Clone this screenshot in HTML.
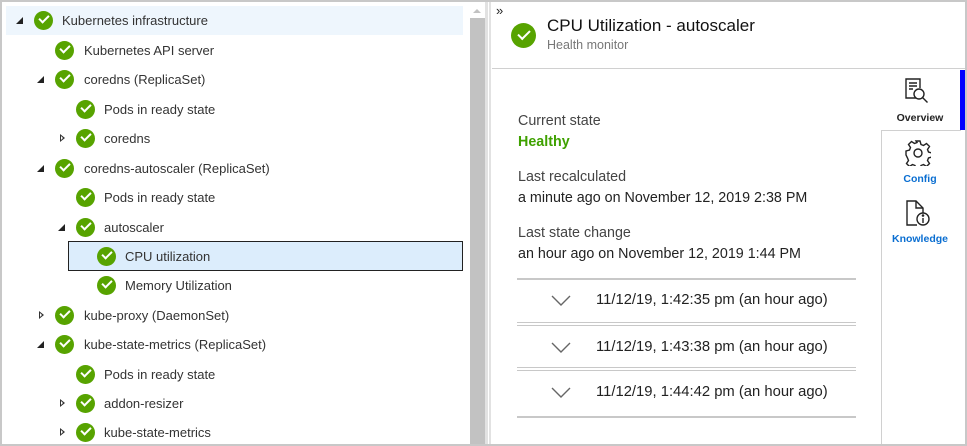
<!DOCTYPE html>
<html><head><style>
*{margin:0;padding:0;box-sizing:border-box}
body{width:967px;height:446px;background:#fff;font-family:"Segoe UI","Liberation Sans",sans-serif;overflow:hidden;position:relative;color:#222}
.abs{position:absolute}
.frame{left:0;top:0;width:967px;height:446px;border:2px solid #c8c8c8;border-right-width:2px}
.row{position:absolute;height:26px;font-size:13px;color:#333;line-height:26px;white-space:nowrap}
.ic{position:absolute;width:19px;height:19px;border-radius:50%;background:#57a300}
.ic::after{content:"";position:absolute;left:5px;top:4px;width:8px;height:4px;border-left:2.2px solid #fff;border-bottom:2.2px solid #fff;transform:rotate(-45deg)}
.ic.big::after{left:7px;top:7px;width:10px;height:5px;border-width:2.6px}
.tri{position:absolute;width:0;height:0}
.down{border-left:7px solid transparent;border-bottom:7px solid #222}
.right{border-top:4px solid transparent;border-bottom:4px solid transparent;border-left:5px solid #333}
.right::after{content:"";position:absolute;left:-4px;top:-2px;border-top:2px solid transparent;border-bottom:2px solid transparent;border-left:2.5px solid #fff}
.lbl{font-size:14.3px;color:#444}
.val{font-size:14.3px;color:#222}
.line{position:absolute;left:517px;width:339px;height:2px;background:#c8c8c8}
.hist{position:absolute;left:596px;font-size:14.8px;color:#222}
.chev{position:absolute;left:551px}
.tab{position:absolute;font-size:10.5px;font-weight:bold;text-align:center;width:80px;left:880px}
</style></head><body>
<div class="abs frame"></div>
<div class="abs" style="left:6px;top:6px;width:457px;height:29px;background:#eef6fd"></div>
<div class="abs" style="left:68px;top:241px;width:395px;height:30px;background:#dcedfc;border:1.5px solid #222"></div>
<div class="abs" style="left:470px;top:2px;width:15px;height:442px;background:#c2c2c2"></div>
<div class="abs" style="left:470px;top:2px;width:15px;height:16px;background:#fff"></div>
<div class="abs" style="left:473px;top:9px;border-left:4px solid transparent;border-right:4px solid transparent;border-bottom:4px solid #c2c2c2"></div>
<div class="abs" style="left:485px;top:2px;width:6px;height:442px;background:#e2e2e2"></div>
<div class="abs" style="left:488px;top:2px;width:1px;height:442px;background:#fff"></div>

<div class="tri down" style="left:16px;top:17px"></div><div class="ic" style="left:34px;top:11px"></div><div class="row" style="left:62px;top:8px">Kubernetes infrastructure</div>
<div class="ic" style="left:55px;top:41px"></div><div class="row" style="left:84px;top:38px">Kubernetes API server</div>
<div class="tri down" style="left:37px;top:76px"></div><div class="ic" style="left:55px;top:70px"></div><div class="row" style="left:84px;top:67px">coredns (ReplicaSet)</div>
<div class="ic" style="left:76px;top:100px"></div><div class="row" style="left:104px;top:97px">Pods in ready state</div>
<div class="tri right" style="left:60px;top:134px"></div><div class="ic" style="left:76px;top:129px"></div><div class="row" style="left:104px;top:126px">coredns</div>
<div class="tri down" style="left:37px;top:165px"></div><div class="ic" style="left:55px;top:159px"></div><div class="row" style="left:84px;top:156px">coredns-autoscaler (ReplicaSet)</div>
<div class="ic" style="left:76px;top:188px"></div><div class="row" style="left:104px;top:185px">Pods in ready state</div>
<div class="tri down" style="left:58px;top:224px"></div><div class="ic" style="left:76px;top:218px"></div><div class="row" style="left:104px;top:215px">autoscaler</div>
<div class="ic" style="left:97px;top:247px"></div><div class="row" style="left:125px;top:244px">CPU utilization</div>
<div class="ic" style="left:97px;top:276px"></div><div class="row" style="left:125px;top:273px">Memory Utilization</div>
<div class="tri right" style="left:39px;top:311px"></div><div class="ic" style="left:55px;top:306px"></div><div class="row" style="left:84px;top:303px">kube-proxy (DaemonSet)</div>
<div class="tri down" style="left:37px;top:341px"></div><div class="ic" style="left:55px;top:335px"></div><div class="row" style="left:84px;top:332px">kube-state-metrics (ReplicaSet)</div>
<div class="ic" style="left:76px;top:365px"></div><div class="row" style="left:104px;top:362px">Pods in ready state</div>
<div class="tri right" style="left:60px;top:399px"></div><div class="ic" style="left:76px;top:394px"></div><div class="row" style="left:104px;top:391px">addon-resizer</div>
<div class="tri right" style="left:60px;top:428px"></div><div class="ic" style="left:76px;top:423px"></div><div class="row" style="left:104px;top:420px">kube-state-metrics</div>

<div class="abs" style="left:496px;top:3px;font-size:13px;color:#222">»</div>
<div class="ic big" style="left:511px;top:23px;width:25px;height:25px"></div>
<div class="abs" style="left:547px;top:16px;font-size:17px;color:#111">CPU Utilization - autoscaler</div>
<div class="abs" style="left:547px;top:38px;font-size:12.5px;color:#777">Health monitor</div>
<div class="abs" style="left:492px;top:68px;width:473px;height:1px;background:#d0d0d0"></div>

<div class="abs lbl" style="left:518px;top:113px">Current state</div>
<div class="abs" style="left:518px;top:134px;font-size:14.3px;font-weight:bold;color:#3fa100">Healthy</div>
<div class="abs lbl" style="left:518px;top:169px">Last recalculated</div>
<div class="abs val" style="left:518px;top:190px">a minute ago on November 12, 2019 2:38 PM</div>
<div class="abs lbl" style="left:518px;top:225px">Last state change</div>
<div class="abs val" style="left:518px;top:246px">an hour ago on November 12, 2019 1:44 PM</div>
<div class="line" style="top:278px"></div>
<svg class="chev" style="top:295px" width="20" height="12"><path d="M1 1l9 9 9-9" fill="none" stroke="#666" stroke-width="1.4"/></svg>
<div class="hist" style="top:292px">11/12/19, 1:42:35 pm (an hour ago)</div>
<div class="line" style="top:322px;height:1px"></div><div class="line" style="top:325px;height:1px"></div>
<svg class="chev" style="top:342px" width="20" height="12"><path d="M1 1l9 9 9-9" fill="none" stroke="#666" stroke-width="1.4"/></svg>
<div class="hist" style="top:339px">11/12/19, 1:43:38 pm (an hour ago)</div>
<div class="line" style="top:367px;height:1px"></div><div class="line" style="top:370px;height:1px"></div>
<svg class="chev" style="top:387px" width="20" height="12"><path d="M1 1l9 9 9-9" fill="none" stroke="#666" stroke-width="1.4"/></svg>
<div class="hist" style="top:384px">11/12/19, 1:44:42 pm (an hour ago)</div>
<div class="line" style="top:416px"></div>

<div class="abs" style="left:881px;top:130px;width:1px;height:314px;background:#d0d0d0"></div>
<div class="abs" style="left:881px;top:130px;width:80px;height:1px;background:#d0d0d0"></div>
<div class="abs" style="left:960px;top:70px;width:5px;height:60px;background:#0000ff"></div>
<svg class="abs" style="left:904px;top:78px" width="28" height="30" viewBox="0 0 28 30" fill="none" stroke="#222" stroke-width="1.4">
<path d="M12 20H2V1h14v9"/><path d="M5 5h8M5 8h8M5 11h4"/><circle cx="15" cy="16" r="5"/><path d="M18.5 19.5l5 5"/></svg>
<div class="tab" style="top:112px;color:#222">Overview</div>
<svg class="abs" style="left:905px;top:140px" width="26" height="26" viewBox="0 0 26 26" fill="none" stroke="#222" stroke-width="1.4">
<path d="M11 1h4l1 3.5 2.5 1 3-2 3 3-2 3 1 2.5 3.5 1v4l-3.5 1-1 2.5 2 3-3 3-3-2-2.5 1-1 3.5h-4l-1-3.5-2.5-1-3 2-3-3 2-3-1-2.5L1 15v-4l3.5-1 1-2.5-2-3 3-3 3 2 2.5-1z"/><circle cx="13" cy="13" r="4"/></svg>
<div class="tab" style="top:173px;color:#0a6ed1">Config</div>
<svg class="abs" style="left:906px;top:200px" width="26" height="28" viewBox="0 0 26 28" fill="none" stroke="#222" stroke-width="1.4">
<path d="M11 25H1V1h9l7 7v5"/><path d="M10 1v7h7"/><circle cx="17" cy="19" r="6"/><path d="M17 18v5"/><circle cx="17" cy="15.5" r=".6" fill="#222"/></svg>
<div class="tab" style="top:233px;color:#0a6ed1">Knowledge</div>
</body></html>
